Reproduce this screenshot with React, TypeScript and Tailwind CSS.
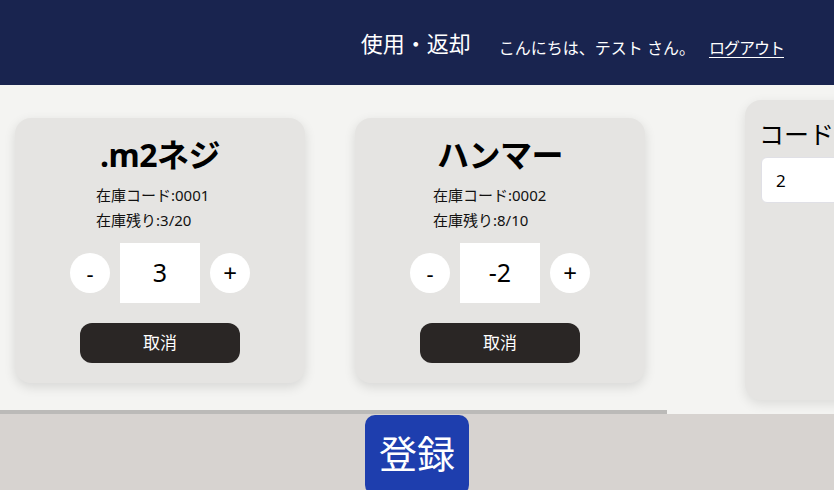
import { useState } from 'react';

type Item = {
  name: string;
  code: string;
  stock: number;
  max: number;
  qty: number;
};

const items: Item[] = [
  { name: '.m2ネジ', code: '0001', stock: 3, max: 20, qty: 3 },
  { name: 'ハンマー', code: '0002', stock: 8, max: 10, qty: -2 },
];

const ItemCard = ({ item }: { item: Item }) => {
  const [qty, setQty] = useState(item.qty);

  return (
    <div className="flex h-[265px] w-[290px] shrink-0 flex-col items-center rounded-[16px] bg-[#e5e4e2] pt-[17px] shadow-[0_4px_12px_rgba(0,0,0,0.12)]">
      <div className="mx-auto w-fit">
        <h2 className="text-center text-[32px] font-bold leading-[40px] tracking-[-0.5px] text-black">{item.name}</h2>
        <div className="-ml-[4px] mt-[8px] text-[15px] leading-[25px] text-[#111]">
          <p>在庫コード:{item.code}</p>
          <p>
            在庫残り:{item.stock}/{item.max}
          </p>
        </div>
      </div>

      {/* Counter */}
      <div className="mt-[10px] flex items-center gap-[10px]">
        <button
          className="flex h-[40px] w-[40px] items-center justify-center rounded-full bg-white text-[22px] text-black"
          onClick={() => setQty(qty - 1)}
        >
          -
        </button>
        <div className="flex h-[60px] w-[80px] items-center justify-center bg-white text-[25px] text-black">{qty}</div>
        <button
          className="flex h-[40px] w-[40px] items-center justify-center rounded-full bg-white text-[24px] text-black"
          onClick={() => setQty(qty + 1)}
        >
          +
        </button>
      </div>

      <button className="mt-[20px] flex h-[40px] w-[160px] items-center justify-center rounded-[12px] bg-[#2a2625] text-[17px] text-white">
        取消
      </button>
    </div>
  );
};

export default function App() {
  return (
    <div className="flex min-h-screen flex-col bg-[#f4f4f2] font-['Noto_Sans','Noto_Sans_CJK_JP',sans-serif]">
      {/* Header */}
      <header className="flex h-[85px] shrink-0 items-center justify-end bg-[#19244f] pr-[50px] text-white">
        <span className="text-[22px] leading-none">使用・返却</span>
        <span className="ml-[28px] mt-[10px] text-[16px] leading-none">こんにちは、テスト さん。</span>
        <a href="#" className="ml-[14px] mt-[10px] text-[16px] leading-none tracking-[-1px] underline underline-offset-[3px]">
          ログアウト
        </a>
      </header>

      {/* Main */}
      <main className="flex h-[329px] shrink-0 overflow-hidden">
        <div className="flex w-[667px] shrink-0 flex-col">
          <div className="flex flex-1 gap-[50px] overflow-hidden pl-[15px] pt-[33px]">
            {items.map((item) => (
              <ItemCard key={item.code} item={item} />
            ))}
          </div>
          <div className="h-[4px] bg-[#bbbab8]" />
        </div>

        <div className="ml-[78px] mt-[15px] h-[300px] w-[260px] shrink-0 rounded-[16px] bg-[#e5e4e2] px-[16px] pt-[19px] shadow-[0_4px_12px_rgba(0,0,0,0.1)]">
          <p className="-ml-[2px] whitespace-nowrap text-[25px] leading-[30px] text-black">コードで検索</p>
          <input
            defaultValue="2"
            className="mt-[8px] h-[46px] w-full rounded-[6px] border border-[#e0e0e6] bg-white px-[14px] text-[17px] text-black outline-none"
          />
        </div>
      </main>

      {/* Footer */}
      <footer className="flex flex-1 justify-center bg-[#d7d3d0]">
        <button className="mt-[1px] h-[80px] rounded-[10px] bg-[#1e3eae] px-[14px] pb-[4px] text-[38px] text-white">
          登録
        </button>
      </footer>
    </div>
  );
}
